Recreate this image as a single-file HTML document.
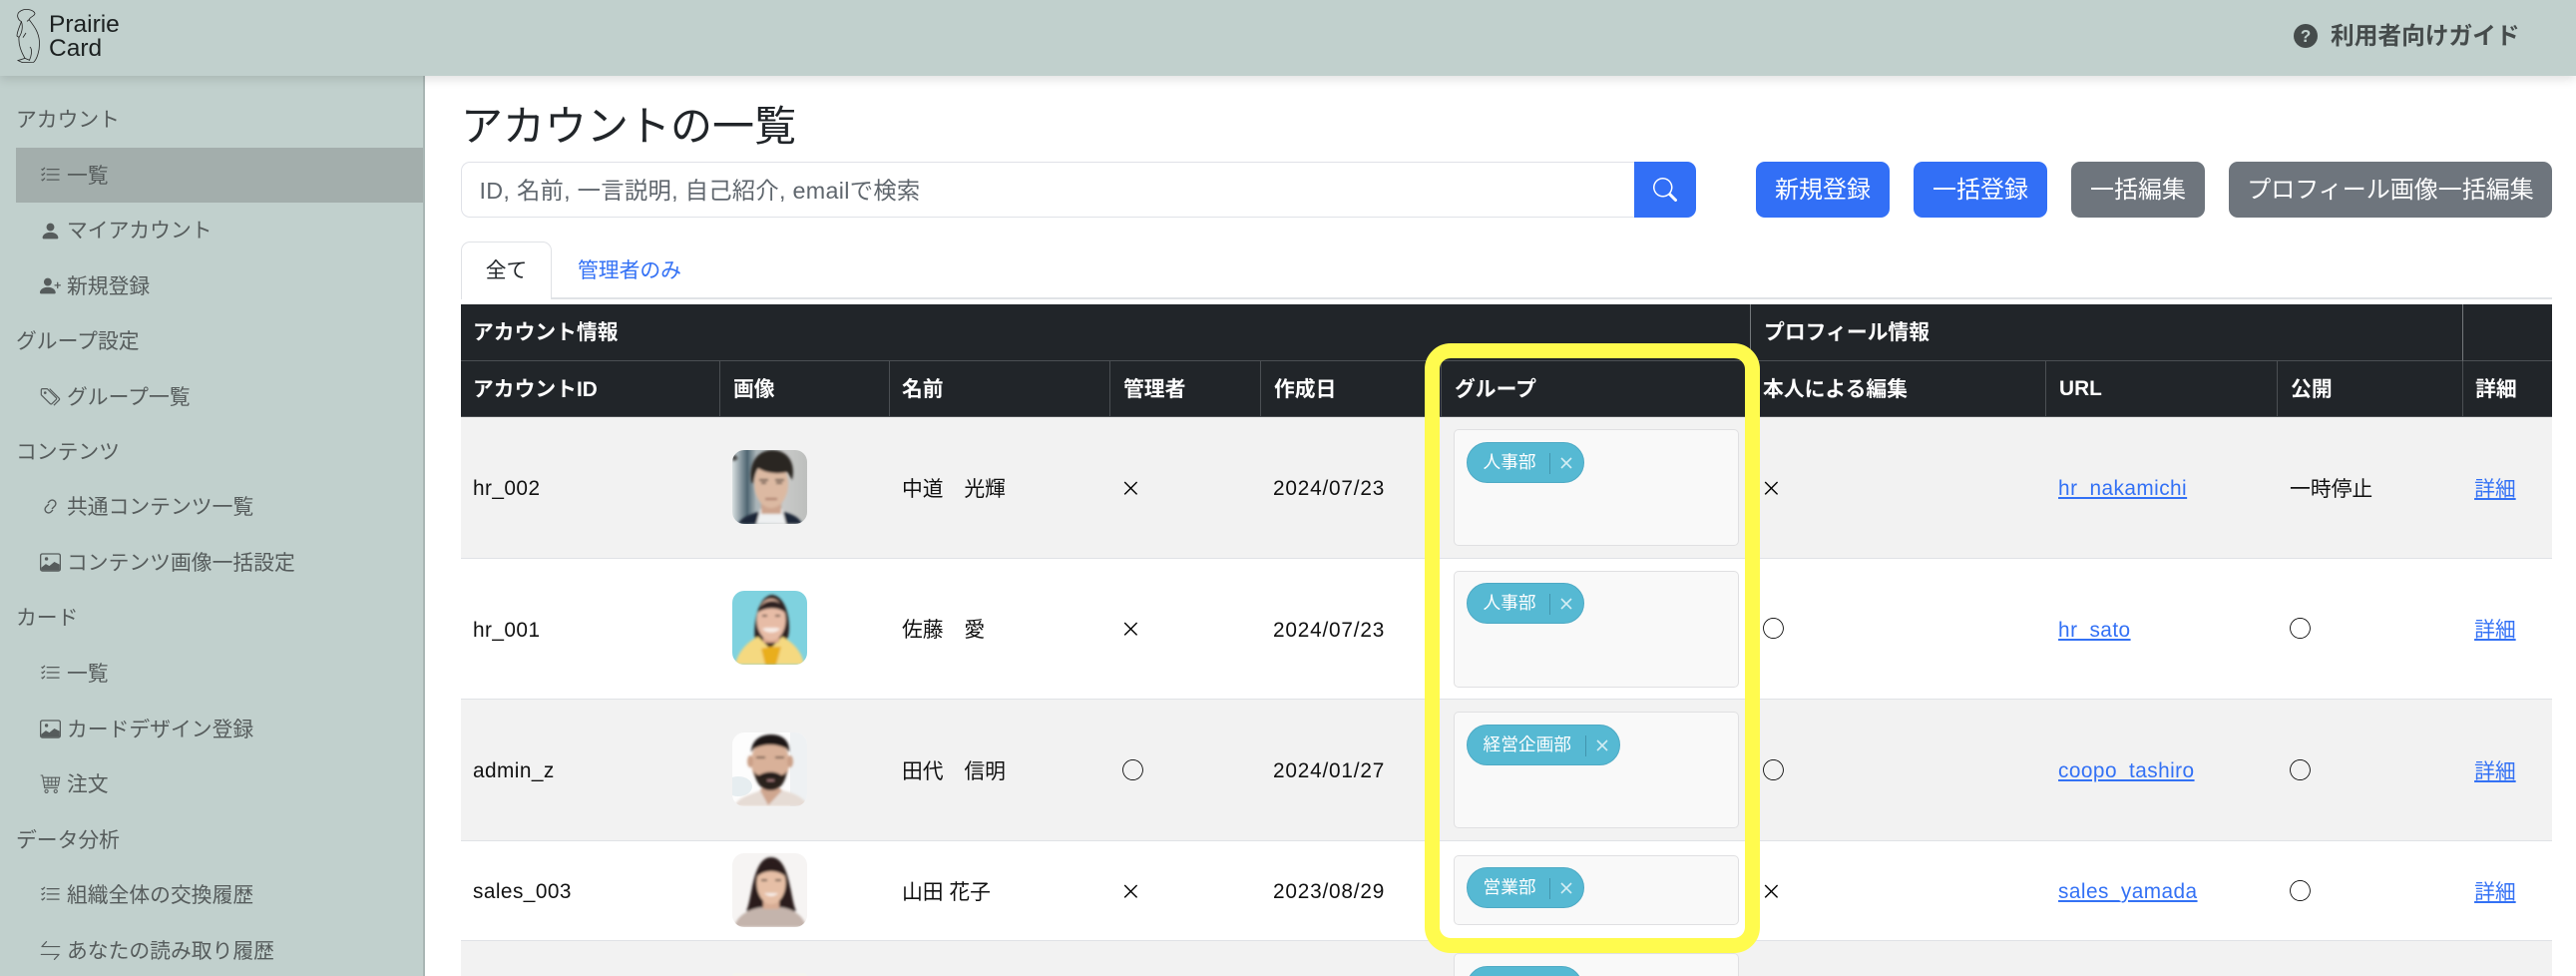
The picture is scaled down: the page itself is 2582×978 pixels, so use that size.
<!DOCTYPE html>
<html lang="ja">
<head>
<meta charset="utf-8">
<title>アカウントの一覧</title>
<style>
*{box-sizing:border-box}
html,body{margin:0;padding:0;width:2582px;height:978px;overflow:hidden;background:#fff;font-family:"Liberation Sans","Noto Sans CJK JP",sans-serif;color:#000}
.wrap{position:relative;width:2582px;height:978px;overflow:hidden;background:#fff}
.top{position:absolute;left:0;top:0;width:2582px;height:76px;background:#c1d0cd;box-shadow:0 3px 10px rgba(0,0,0,.13);z-index:3}
.logo{position:absolute;left:16px;top:9px}
.lt{position:absolute;left:49px;font-size:24.5px;line-height:24px;color:#1c2121}
.guide{position:absolute;left:2336px;top:17px;height:40px;line-height:40px;font-size:23.7px;font-weight:bold;color:#454b4b;white-space:nowrap}
.side{position:absolute;left:0;top:76px;width:426px;height:902px;background:#c1d0cd;border-right:2px solid #a9b6b4;z-index:2}
.active{position:absolute;left:16px;top:72px;width:408px;height:55px;background:#a3aeac}
.si{position:absolute;height:56px;line-height:59px;font-size:20.8px;color:#565c5c;white-space:nowrap}
.ic{position:absolute;left:40px;width:21px;height:21px;fill:#565c5c;z-index:3}
h1{position:absolute;left:462px;top:97px;margin:0;font-size:42px;line-height:60px;font-weight:400;color:#212529;white-space:nowrap}
.search{position:absolute;left:462px;top:162px;width:1177px;height:56px;border:1.5px solid #e0e2e8;border-right:0;border-radius:9px 0 0 9px;background:#fff;font-size:23.3px;line-height:56px;padding-left:17.5px;color:#5f666d;white-space:nowrap;letter-spacing:.3px}
.sbtn{position:absolute;left:1638px;top:162px;width:62px;height:56px;background:#326ff6;border-radius:0 9px 9px 0}
.btn{position:absolute;top:162px;height:56px;line-height:57px;border-radius:9px;text-align:center;color:#fff;font-size:24px;white-space:nowrap}
.blue{background:#326ff6}.gray{background:#6e757d}
.tabline{position:absolute;left:462px;top:298px;width:2096px;height:1.5px;background:#e0e2e6}
.tab{position:absolute;left:462px;top:242px;width:91px;height:58px;background:#fff;border:1.5px solid #e0e2e6;border-bottom:0;border-radius:9px 9px 0 0;font-size:20.8px;line-height:58px;text-align:center;color:#212529}
.tab2{position:absolute;left:579px;top:242px;height:58px;font-size:20.8px;line-height:59px;color:#3371f5;white-space:nowrap}
table{position:absolute;left:462px;top:305px;width:2096px;table-layout:fixed;border-collapse:separate;border-spacing:0;font-size:20.8px}
th{background:#212529;color:#fff;font-weight:bold;text-align:left;padding:0 0 0 13px;border-right:1.5px solid #4b4f53;border-bottom:1.5px solid #4b4f53;white-space:nowrap;overflow:hidden}
th.f{padding-left:12px}
th.nb{border-right:0}
th.lg{border-right-color:#74787b}
.r1 th{height:57px;padding-bottom:4px}
.r2 th{height:56px;padding-bottom:4px}
td{padding:0 0 2px 12px;vertical-align:middle;border-bottom:1.5px solid #e0e2e6;white-space:nowrap;color:#111}
td.g{padding-bottom:0}
td.last{padding-left:11px}
tr.s td{background:#f2f2f2}
.b142 td{height:142px}.b141 td{height:141px}.b100 td{height:100px}
.ph{display:block;width:75px;height:74px;border-radius:12px}
.x,.o{font-family:"Noto Sans CJK JP",sans-serif;color:#000;display:inline-block}
.x{font-size:20.8px;margin-left:-2px}
.o{font-size:23px;margin-left:-1px;line-height:24px;position:relative;top:1px}
.l{position:relative;top:2.5px;letter-spacing:.45px}
.d{letter-spacing:.8px}
a{color:#3371f5;text-decoration:underline}
.box{width:286px;height:117px;border:1.5px solid #e0e0e2;border-radius:5px;background:#f9f9f9;padding:11.5px 0 0 11.5px}
.box.sh{height:70px}
.pill{display:inline-block;position:relative;height:41px;border-radius:21px;background:#56b9d3;border:1px solid #4eaac5;color:#fff;font-size:17.7px;line-height:39px;padding-left:16px;white-space:nowrap;vertical-align:top}
.pill i{position:absolute;top:10px;width:1px;height:21px;background:#4295ae}
.pill svg{position:absolute;top:14px;width:12px;height:12px}
.frame{position:absolute;left:1428px;top:344px;width:336px;height:611px;border:15px solid #fffb4e;border-radius:26px;z-index:5}
.clip{height:35px;overflow:hidden}
.b35 td{height:35px;padding:0 0 0 12px;border-bottom:0;vertical-align:top}
</style>
</head>
<body>
<div class="wrap">
<svg width="0" height="0" style="position:absolute"><defs><filter id="bl" x="-10%" y="-10%" width="120%" height="120%"><feGaussianBlur stdDeviation="1.2"/></filter></defs></svg>

<div class="top">
  <svg class="logo" width="26" height="56" viewBox="16 9 26 56" fill="none" stroke="#222" stroke-width=".8">
    <path d="M24 9.6C29 8.8 34 10.6 35 13.6C34.6 16.4 30 16.6 29.2 19.6C33 25 38.6 31 39.4 41C40.2 51 36.6 60 33.6 62.4L22.4 62.6L18 60.6L25 58.4C20.4 50.6 18.4 44 19 37.4L17 36C17 31.6 20 26 21.4 21.6C17.6 19.6 16.6 15 18.8 12.4C20.6 10.6 22.4 10 24 9.6Z"/>
    <path d="M21.4 21.6C23 26 22.6 32 19 37.4M23 37.6L26 33M25 58.4L30 60.5M30 47C33 50 31 57 29.6 60M29.2 19.6L27 21.4"/>
  </svg>
  <div class="lt" style="top:13px">Prairie</div>
  <div class="lt" style="top:37px">Card</div>
  <svg style="position:absolute;left:2299px;top:24px" width="24" height="24" viewBox="0 0 16 16"><circle cx="8" cy="8" r="8" fill="#454b4b"/><text x="8" y="12" text-anchor="middle" font-size="11.5" font-weight="bold" fill="#c1d0cd" font-family="Liberation Sans">?</text></svg>
  <div class="guide">利用者向けガイド</div>
</div>

<div class="side">
  <div class="active"></div>
  <div class="si" style="left:16px;top:15px">アカウント</div>
  <div class="si" style="left:67px;top:71px">一覧</div>
  <div class="si" style="left:67px;top:126px">マイアカウント</div>
  <div class="si" style="left:67px;top:182px">新規登録</div>
  <div class="si" style="left:16px;top:237px">グループ設定</div>
  <div class="si" style="left:67px;top:293px">グループ一覧</div>
  <div class="si" style="left:16px;top:348px">コンテンツ</div>
  <div class="si" style="left:67px;top:403px">共通コンテンツ一覧</div>
  <div class="si" style="left:67px;top:459px">コンテンツ画像一括設定</div>
  <div class="si" style="left:16px;top:514px">カード</div>
  <div class="si" style="left:67px;top:570px">一覧</div>
  <div class="si" style="left:67px;top:626px">カードデザイン登録</div>
  <div class="si" style="left:67px;top:681px">注文</div>
  <div class="si" style="left:16px;top:737px">データ分析</div>
  <div class="si" style="left:67px;top:792px">組織全体の交換履歴</div>
  <div class="si" style="left:67px;top:848px">あなたの読み取り履歴</div>

  <svg class="ic" style="top:89px" viewBox="0 0 16 16"><path d="M5 11.5a.5.5 0 0 1 .5-.5h9a.5.5 0 0 1 0 1h-9a.5.5 0 0 1-.5-.5zm0-4a.5.5 0 0 1 .5-.5h9a.5.5 0 0 1 0 1h-9a.5.5 0 0 1-.5-.5zm0-4a.5.5 0 0 1 .5-.5h9a.5.5 0 0 1 0 1h-9a.5.5 0 0 1-.5-.5zM3.854 2.146a.5.5 0 0 1 0 .708l-1.5 1.5a.5.5 0 0 1-.708 0l-.5-.5a.5.5 0 1 1 .708-.708L2 3.293l1.146-1.147a.5.5 0 0 1 .708 0zm0 4a.5.5 0 0 1 0 .708l-1.5 1.5a.5.5 0 0 1-.708 0l-.5-.5a.5.5 0 1 1 .708-.708L2 7.293l1.146-1.147a.5.5 0 0 1 .708 0zm0 4a.5.5 0 0 1 0 .708l-1.5 1.5a.5.5 0 0 1-.708 0l-.5-.5a.5.5 0 0 1 .708-.708l.146.147 1.146-1.147a.5.5 0 0 1 .708 0z"/></svg>
  <svg class="ic" style="top:145px" viewBox="0 0 16 16"><path d="M3 14s-1 0-1-1 1-4 6-4 6 3 6 4-1 1-1 1H3Zm5-6a3 3 0 1 0 0-6 3 3 0 0 0 0 6Z"/></svg>
  <svg class="ic" style="top:200px" viewBox="0 0 16 16"><path d="M1 14s-1 0-1-1 1-4 6-4 6 3 6 4-1 1-1 1H1zm5-6a3 3 0 1 0 0-6 3 3 0 0 0 0 6z"/><path d="M13.5 5a.5.5 0 0 1 .5.5V7h1.5a.5.5 0 0 1 0 1H14v1.5a.5.5 0 0 1-1 0V8h-1.5a.5.5 0 0 1 0-1H13V5.5a.5.5 0 0 1 .5-.5z"/></svg>
  <svg class="ic" style="top:311px;fill:none" viewBox="0 0 16 16" stroke="#565c5c" stroke-width=".9" stroke-linejoin="round"><path d="M1 3V6.6L7.8 13.4C8.2 13.8 8.8 13.8 9.2 13.4L12.4 10.2C12.8 9.8 12.8 9.2 12.4 8.8L5.6 2H2C1.4 2 1 2.4 1 3Z"/><circle cx="4" cy="5" r="1" fill="#565c5c" stroke="none"/><path d="M7.4 2L14.6 9.2C15 9.6 15 10.2 14.6 10.6L10.6 14.6"/></svg>
  <svg class="ic" style="top:421px;fill:none" viewBox="0 0 16 16" stroke="#565c5c" stroke-width="1.05" stroke-linecap="round"><path d="M6.6 6.4L4.5 8.5A2.7 2.7 0 0 0 8.3 12.3L9.6 11"/><path d="M9.4 9.6L11.5 7.5A2.7 2.7 0 0 0 7.7 3.7L6.4 5"/></svg>
  <svg class="ic" style="top:477px" viewBox="0 0 16 16"><rect x=".5" y="1.5" width="15" height="13" rx="1.4" fill="none" stroke="#565c5c"/><circle cx="5" cy="5.3" r="1.3"/><path d="M1 12L4.5 9.2L7.2 10.8L11 7.6L15 9.6V13.2C15 13.7 14.7 14 14.2 14H1.8C1.3 14 1 13.7 1 13.2Z"/></svg>
  <svg class="ic" style="top:588px" viewBox="0 0 16 16"><path d="M5 11.5a.5.5 0 0 1 .5-.5h9a.5.5 0 0 1 0 1h-9a.5.5 0 0 1-.5-.5zm0-4a.5.5 0 0 1 .5-.5h9a.5.5 0 0 1 0 1h-9a.5.5 0 0 1-.5-.5zm0-4a.5.5 0 0 1 .5-.5h9a.5.5 0 0 1 0 1h-9a.5.5 0 0 1-.5-.5zM3.854 2.146a.5.5 0 0 1 0 .708l-1.5 1.5a.5.5 0 0 1-.708 0l-.5-.5a.5.5 0 1 1 .708-.708L2 3.293l1.146-1.147a.5.5 0 0 1 .708 0zm0 4a.5.5 0 0 1 0 .708l-1.5 1.5a.5.5 0 0 1-.708 0l-.5-.5a.5.5 0 1 1 .708-.708L2 7.293l1.146-1.147a.5.5 0 0 1 .708 0zm0 4a.5.5 0 0 1 0 .708l-1.5 1.5a.5.5 0 0 1-.708 0l-.5-.5a.5.5 0 0 1 .708-.708l.146.147 1.146-1.147a.5.5 0 0 1 .708 0z"/></svg>
  <svg class="ic" style="top:644px" viewBox="0 0 16 16"><rect x=".5" y="1.5" width="15" height="13" rx="1.4" fill="none" stroke="#565c5c"/><circle cx="5" cy="5.3" r="1.3"/><path d="M1 12L4.5 9.2L7.2 10.8L11 7.6L15 9.6V13.2C15 13.7 14.7 14 14.2 14H1.8C1.3 14 1 13.7 1 13.2Z"/></svg>
  <svg class="ic" style="top:699px;fill:none" viewBox="0 0 16 16" stroke="#565c5c" stroke-width=".8"><path d="M.5 1.5H2L3.6 11H13.6"/><path d="M2.6 3.2H15L14 9.2H3.4M6.2 3.2V9.2M9 3.2V9.2M11.9 3.2V9.2M3 6.2H14.5"/><circle cx="5" cy="13.6" r="1.2"/><circle cx="12" cy="13.6" r="1.2"/></svg>
  <svg class="ic" style="top:810px" viewBox="0 0 16 16"><path d="M5 11.5a.5.5 0 0 1 .5-.5h9a.5.5 0 0 1 0 1h-9a.5.5 0 0 1-.5-.5zm0-4a.5.5 0 0 1 .5-.5h9a.5.5 0 0 1 0 1h-9a.5.5 0 0 1-.5-.5zm0-4a.5.5 0 0 1 .5-.5h9a.5.5 0 0 1 0 1h-9a.5.5 0 0 1-.5-.5zM3.854 2.146a.5.5 0 0 1 0 .708l-1.5 1.5a.5.5 0 0 1-.708 0l-.5-.5a.5.5 0 1 1 .708-.708L2 3.293l1.146-1.147a.5.5 0 0 1 .708 0zm0 4a.5.5 0 0 1 0 .708l-1.5 1.5a.5.5 0 0 1-.708 0l-.5-.5a.5.5 0 1 1 .708-.708L2 7.293l1.146-1.147a.5.5 0 0 1 .708 0zm0 4a.5.5 0 0 1 0 .708l-1.5 1.5a.5.5 0 0 1-.708 0l-.5-.5a.5.5 0 0 1 .708-.708l.146.147 1.146-1.147a.5.5 0 0 1 .708 0z"/></svg>
  <svg class="ic" style="top:866px;fill:none" viewBox="0 0 16 16" stroke="#565c5c" stroke-width=".9" stroke-linecap="round" stroke-linejoin="round"><path d="M15 5H1.5L5 1.2"/><path d="M1 11H14.5L11 14.8"/></svg>
</div>

<h1>アカウントの一覧</h1>
<div class="search">ID, 名前, 一言説明, 自己紹介, emailで検索</div>
<div class="sbtn"><svg style="position:absolute;left:19px;top:16px" width="24" height="24" viewBox="0 0 16 16" fill="#fff"><path d="M11.742 10.344a6.5 6.5 0 1 0-1.397 1.398h-.001c.03.04.062.078.098.115l3.85 3.85a1 1 0 0 0 1.415-1.414l-3.85-3.85a1.007 1.007 0 0 0-.115-.1zM12 6.5a5.5 5.5 0 1 1-11 0 5.5 5.5 0 0 1 11 0z"/></svg></div>
<div class="btn blue" style="left:1760px;width:134px">新規登録</div>
<div class="btn blue" style="left:1918px;width:134px">一括登録</div>
<div class="btn gray" style="left:2076px;width:134px">一括編集</div>
<div class="btn gray" style="left:2234px;width:324px">プロフィール画像一括編集</div>

<div class="tabline"></div>
<div class="tab">全て</div>
<div class="tab2">管理者のみ</div>

<table>
<colgroup><col style="width:260px"><col style="width:170px"><col style="width:221px"><col style="width:151px"><col style="width:181px"><col style="width:310px"><col style="width:296px"><col style="width:232px"><col style="width:186px"><col style="width:89px"></colgroup>
<thead>
<tr class="r1"><th colspan="6" class="lg f">アカウント情報</th><th colspan="3" class="lg">プロフィール情報</th><th class="nb"></th></tr>
<tr class="r2"><th class="f">アカウントID</th><th>画像</th><th class="f">名前</th><th>管理者</th><th>作成日</th><th>グループ</th><th class="f">本人による編集</th><th><span class="l" style="top:2px;letter-spacing:0">URL</span></th><th>公開</th><th class="nb f">詳細</th></tr>
</thead>
<tbody>
<tr class="s b142">
<td><span class="l">hr_002</span></td>
<td><svg class="ph" viewBox="0 0 75 74"><defs><linearGradient id="g1" x1="0" x2="1"><stop offset="0" stop-color="#d8dfe0"/><stop offset=".2" stop-color="#4f6672"/><stop offset=".32" stop-color="#a9b4b8"/><stop offset=".7" stop-color="#c8c9c8"/><stop offset="1" stop-color="#bdbfbd"/></linearGradient></defs><rect width="75" height="74" fill="url(#g1)"/><g filter="url(#bl)"><path d="M6 74C8 68 18 64 26 62H52C60 64 68 68 70 74Z" fill="#1f2838"/><path d="M24 74L28 59H50L54 74Z" fill="#eef0f1"/><rect x="29" y="48" width="20" height="16" fill="#cda48e"/><ellipse cx="39" cy="34" rx="17" ry="24" fill="#dcb9a2"/><path d="M19 32C16 12 26 0 40 0C55 0 64 12 60 30L55 22C48 24 34 24 26 18C23 22 22 28 21 34Z" fill="#2b2522"/><path d="M27 30H36M43 30H52" stroke="#2a2320" stroke-width="1.6"/><path d="M29 33H34M44 33H50" stroke="#3b2e28" stroke-width="1.6"/><path d="M33 49H45" stroke="#9a6554" stroke-width="1.6"/><rect x="0" y="5" width="5" height="5" fill="#444" transform="rotate(-30 3 8)"/></g></svg></td>
<td>中道　光輝</td><td><span class="x">×</span></td><td><span class="l d">2024/07/23</span></td>
<td class="g"><div class="box"><span class="pill" style="width:118px">人事部<i style="left:82px"></i><svg style="left:93px" viewBox="0 0 12 12"><path d="M1 1L11 11M11 1L1 11" stroke="#d3edf3" stroke-width="1.6"/></svg></span></div></td>
<td><span class="x">×</span></td><td><a href="#" class="l">hr_nakamichi</a></td><td>一時停止</td><td class="last"><a href="#">詳細</a></td>
</tr>
<tr class="b141">
<td><span class="l">hr_001</span></td>
<td><svg class="ph" viewBox="0 0 75 74"><rect width="75" height="74" fill="#7fd2df"/><g filter="url(#bl)"><path d="M24 60C20 44 22 6 40 4C58 6 60 44 54 50L50 62Z" fill="#2e2320"/><path d="M3 74C5 62 16 50 26 46L38 58L50 46C62 52 70 62 72 74Z" fill="#f5d980"/><path d="M29 58L38 56L49 56L44 74H33Z" fill="#e9ae1e"/><rect x="31" y="38" width="16" height="14" fill="#d9a68d"/><ellipse cx="39" cy="29" rx="14.5" ry="21" fill="#e7bca6"/><path d="M25 22C28 12 36 10 40 10C46 10 52 14 53 22C46 16 34 16 25 22Z" fill="#2e2320"/><path d="M30 38C34 43 44 43 48 38L44 37H34Z" fill="#f7ece6"/><path d="M30 25H35M43 25H48" stroke="#3a2a24" stroke-width="1.6"/></g></svg></td>
<td>佐藤　愛</td><td><span class="x">×</span></td><td><span class="l d">2024/07/23</span></td>
<td class="g"><div class="box"><span class="pill" style="width:118px">人事部<i style="left:82px"></i><svg style="left:93px" viewBox="0 0 12 12"><path d="M1 1L11 11M11 1L1 11" stroke="#d3edf3" stroke-width="1.6"/></svg></span></div></td>
<td><span class="o">○</span></td><td><a href="#" class="l">hr_sato</a></td><td><span class="o">○</span></td><td class="last"><a href="#">詳細</a></td>
</tr>
<tr class="s b142">
<td><span class="l">admin_z</span></td>
<td><svg class="ph" viewBox="0 0 75 74"><rect width="75" height="74" fill="#fdfdfd"/><rect x="58" y="0" width="17" height="74" fill="#eef1f3"/><ellipse cx="6" cy="54" rx="14" ry="10" fill="#e6edf0"/><g filter="url(#bl)"><path d="M2 74C6 64 20 62 28 58H50C60 60 70 64 75 72V74Z" fill="#e6dcd5"/><path d="M28 58L36 73L50 58L42 52H32Z" fill="#cfa68f"/><ellipse cx="38" cy="30" rx="19" ry="25" fill="#d9b199"/><ellipse cx="18" cy="29" rx="3" ry="6" fill="#cba088"/><ellipse cx="58" cy="29" rx="3" ry="6" fill="#cba088"/><path d="M19 20C19 8 28 2 39 2C50 2 58 8 57 20L54 16C44 11 32 11 22 16Z" fill="#1d1917"/><path d="M21 38C24 52 30 58 38 58C47 58 53 52 55 38C52 44 48 43 38 41C28 43 24 44 21 38Z" fill="#2b211c"/><path d="M28 44C34 40 43 40 48 44" stroke="#1f1815" stroke-width="3" fill="none"/><path d="M35 48H42" stroke="#c99" stroke-width="1.2"/><path d="M24 25H33M43 25H52" stroke="#4a3a30" stroke-width="1.5"/></g></svg></td>
<td>田代　信明</td><td><span class="o">○</span></td><td><span class="l d">2024/01/27</span></td>
<td class="g"><div class="box"><span class="pill" style="width:154px">経営企画部<i style="left:118px"></i><svg style="left:129px" viewBox="0 0 12 12"><path d="M1 1L11 11M11 1L1 11" stroke="#d3edf3" stroke-width="1.6"/></svg></span></div></td>
<td><span class="o">○</span></td><td><a href="#" class="l">coopo_tashiro</a></td><td><span class="o">○</span></td><td class="last"><a href="#">詳細</a></td>
</tr>
<tr class="b100">
<td><span class="l">sales_003</span></td>
<td><svg class="ph" viewBox="0 0 75 74"><rect width="75" height="74" fill="#f6f4f3"/><g filter="url(#bl)"><path d="M14 58C20 46 20 4 39 4C58 4 58 46 64 58L40 62Z" fill="#2a1e1a"/><path d="M2 74C4 62 20 54 32 54H46C58 54 72 62 74 74Z" fill="#c4b4ac"/><rect x="31" y="42" width="16" height="14" fill="#d8ad95"/><ellipse cx="39" cy="30" rx="14.5" ry="21" fill="#e6bfa6"/><path d="M24 24C26 12 34 9 39 9C44 9 52 12 54 24C46 16 32 16 24 24Z" fill="#2a1e1a"/><path d="M32 40C36 44 42 44 46 40Z" fill="#f8efea"/><path d="M29 27H35M43 27H49" stroke="#33251f" stroke-width="1.6"/></g></svg></td>
<td>山田 花子</td><td><span class="x">×</span></td><td><span class="l d">2023/08/29</span></td>
<td style="padding-bottom:2px"><div class="box sh"><span class="pill" style="width:118px">営業部<i style="left:82px"></i><svg style="left:93px" viewBox="0 0 12 12"><path d="M1 1L11 11M11 1L1 11" stroke="#d3edf3" stroke-width="1.6"/></svg></span></div></td>
<td><span class="x">×</span></td><td><a href="#" class="l">sales_yamada</a></td><td><span class="o">○</span></td><td class="last"><a href="#">詳細</a></td>
</tr>
<tr class="s b35">
<td></td>
<td><div class="clip" style="padding-top:32px"><div style="width:75px;height:3px;background:#f4f4ee;border-radius:8px 8px 0 0"></div></div></td>
<td></td><td></td><td></td>
<td><div class="clip" style="padding-top:12px"><div class="box" style="height:23px;border-bottom:0;border-radius:5px 5px 0 0;overflow:hidden"><span class="pill" style="width:116px"></span></div></div></td>
<td></td><td></td><td></td><td></td>
</tr>
</tbody>
</table>

<div class="frame"></div>
</div>
</body>
</html>
